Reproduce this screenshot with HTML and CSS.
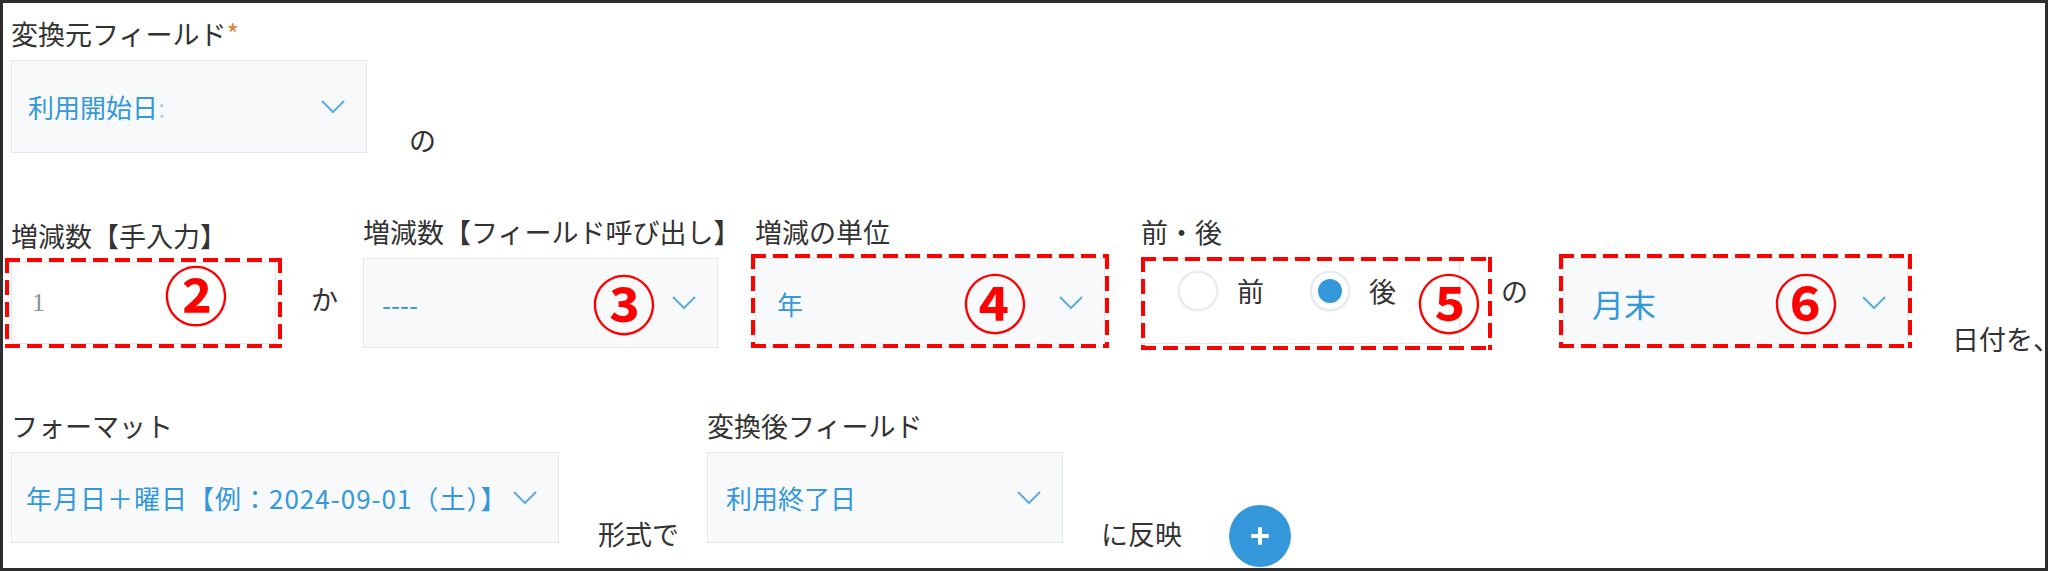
FILE: index.html
```html
<!DOCTYPE html>
<html lang="ja">
<head>
    <meta charset="UTF-8">
    <title>日付計算プラグイン設定</title>
    <link rel="stylesheet" href="styles.css">
</head>
<body>
    <div class="frame">

        <!-- 変換元 -->
        <div class="row">
            <div class="field">
                <div class="field-label">変換元フィールド<span class="req">*</span></div>
                <div class="select select-source">
                    <span class="select-text">利用開始日<span class="faint">:</span></span>
                    <svg class="chevron" viewBox="0 0 24 14"><polyline points="1,1 12,12 23,1"/></svg>
                </div>
            </div>
            <span class="joint joint-first">の</span>
        </div>

        <!-- 増減の設定 -->
        <div class="row row-mid">
            <div class="field">
                <div class="field-label">増減数【手入力】</div>
                <div class="control input-box">
                    <span class="input-value">1</span>
                    <span class="mark-box mark-box-input"></span>
                    <span class="mark mark-2">②</span>
                </div>
            </div>
            <span class="joint joint-ka">か</span>
            <div class="field field-call">
                <div class="field-label">増減数【フィールド呼び出し】</div>
                <div class="control select select-call">
                    <span class="select-text">----</span>
                    <svg class="chevron" viewBox="0 0 24 14"><polyline points="1,1 12,12 23,1"/></svg>
                    <span class="mark mark-3">③</span>
                </div>
            </div>
            <div class="field field-unit">
                <div class="field-label">増減の単位</div>
                <div class="control select select-unit">
                    <span class="select-text">年</span>
                    <svg class="chevron" viewBox="0 0 24 14"><polyline points="1,1 12,12 23,1"/></svg>
                    <span class="mark-box"></span>
                    <span class="mark mark-4">④</span>
                </div>
            </div>
            <div class="field field-side">
                <div class="field-label">前・後</div>
                <div class="control radio-box">
                    <label class="radio-option">
                        <span class="radio"></span>前
                    </label>
                    <label class="radio-option">
                        <span class="radio radio-on"></span>後
                    </label>
                    <span class="mark-box mark-box-radio"></span>
                    <span class="mark mark-5">⑤</span>
                </div>
            </div>
            <span class="joint joint-no2">の</span>
            <div class="field field-edge">
                <div class="control select select-edge">
                    <span class="select-text">月末</span>
                    <svg class="chevron" viewBox="0 0 24 14"><polyline points="1,1 12,12 23,1"/></svg>
                    <span class="mark-box"></span>
                    <span class="mark mark-6">⑥</span>
                </div>
            </div>
            <span class="joint joint-date">日付を、</span>
        </div>

        <!-- 出力 -->
        <div class="row row-last">
            <div class="field">
                <div class="field-label">フォーマット</div>
                <div class="select select-format">
                    <span class="select-text">年月日＋曜日【例：2024-09-01（土）】</span>
                    <svg class="chevron" viewBox="0 0 24 14"><polyline points="1,1 12,12 23,1"/></svg>
                </div>
            </div>
            <span class="joint joint-form">形式で</span>
            <div class="field field-target">
                <div class="field-label">変換後フィールド</div>
                <div class="select select-target">
                    <span class="select-text">利用終了日</span>
                    <svg class="chevron" viewBox="0 0 24 14"><polyline points="1,1 12,12 23,1"/></svg>
                </div>
            </div>
            <span class="joint joint-apply">に反映</span>
            <button class="add-button" type="button">
                <svg viewBox="0 0 20 20"><path d="M10 2v16M2 10h16"/></svg>
            </button>
        </div>

    </div>
</body>
</html>
```

FILE: styles.css
```css
body {
    margin: 0;
    background-color: white;
    font-family: "Noto Sans CJK JP", "Noto Sans", sans-serif;
    color: #333;
}

.frame {
    width: 2048px;
    height: 571px;
    box-sizing: border-box;
    border: 3px solid #2e2e2e;
    padding: 13px 0 0 8px;
    overflow: hidden;
}

.row {
    display: flex;
    align-items: flex-end;
}

.row > * {
    flex-shrink: 0;
}

.row-mid {
    margin-top: 61px;
}

.row-last {
    margin-top: 60px;
}

.field {
    display: flex;
    flex-direction: column;
}

.field-label {
    font-size: 27px;
    line-height: 36px;
    margin-bottom: 8px;
    white-space: nowrap;
}

.req {
    color: #d9833b;
}

/* select */
.select {
    position: relative;
    display: flex;
    align-items: center;
    justify-content: space-between;
    box-sizing: border-box;
    height: 91px;
    padding: 0 21px 0 16px;
    background-color: #f7f9fa;
    border: 1px solid #e3e7e8;
    color: #3498db;
    font-size: 26px;
}

.select-text {
    white-space: nowrap;
}

.faint {
    color: #b9d6ec;
}

.chevron {
    width: 24px;
    height: 14px;
    fill: none;
    stroke: #5dade2;
    stroke-width: 2;
}

.select-source {
    width: 356px;
    height: 93px;
}

.select-call {
    width: 355px;
    height: 90px;
    padding-left: 18px;
}

.select-unit {
    width: 350px;
    height: 90px;
    padding-left: 21px;
}

.select-edge {
    width: 345px;
    height: 90px;
    padding-left: 28px;
    font-size: 32px;
}

.select-format {
    width: 548px;
    padding-left: 14px;
    letter-spacing: 1px;
}

.select-target {
    width: 356px;
    padding-left: 18px;
}

/* input */
.control {
    position: relative;
}

.input-box {
    display: flex;
    align-items: center;
    box-sizing: border-box;
    width: 265px;
    height: 82px;
    margin-bottom: 4px;
    padding-left: 20px;
    background-color: white;
    border: 1px solid #e3e7e8;
    box-shadow: inset 0 0 8px rgba(0, 0, 0, 0.05);
}

.input-value {
    font-family: "Liberation Serif", serif;
    font-size: 26px;
    color: #8593a3;
}

/* radio */
.radio-box {
    display: flex;
    align-items: flex-start;
    gap: 46px;
    box-sizing: border-box;
    width: 319px;
    height: 86px;
    margin-bottom: 4px;
    padding: 12px 0 0 36px;
    background-color: white;
    border: 1px solid #e3e7e8;
}

.radio-option {
    display: flex;
    align-items: center;
    gap: 19px;
    font-size: 27px;
    line-height: 40px;
}

.radio {
    position: relative;
    box-sizing: border-box;
    width: 40px;
    height: 40px;
    border-radius: 50%;
    background-color: white;
    border: 2px solid #e8ecee;
    box-shadow: 0 0 2px rgba(0, 0, 0, 0.12);
}

.radio-on::after {
    content: "";
    position: absolute;
    top: 6px;
    left: 6px;
    width: 24px;
    height: 24px;
    border-radius: 50%;
    background-color: #3498db;
}

/* 接続の文字 */
.joint {
    font-size: 27px;
    line-height: 27px;
    white-space: nowrap;
}

.joint-first {
    margin-left: 42px;
}

.joint-ka {
    margin-left: 35px;
    margin-bottom: 36px;
}

.field-call {
    width: 355px;
    margin-left: 25px;
}

.field-unit {
    margin-left: 37px;
}

.field-side {
    margin-left: 36px;
}

.joint-no2 {
    margin-left: 41px;
    margin-bottom: 44px;
}

.field-edge {
    margin-left: 35px;
}

.joint-date {
    margin-left: 44px;
    margin-bottom: -4px;
}

.joint-form {
    margin-left: 39px;
    margin-bottom: -4px;
}

.field-target {
    margin-left: 28px;
}

.joint-apply {
    margin-left: 38px;
    margin-bottom: -4px;
}

.add-button {
    width: 62px;
    height: 62px;
    margin-left: 47px;
    margin-bottom: -24px;
    padding: 0;
    border: none;
    border-radius: 50%;
    background-color: #3498db;
    display: flex;
    align-items: center;
    justify-content: center;
}

.add-button svg {
    width: 22px;
    height: 22px;
    fill: none;
    stroke: white;
    stroke-width: 3.5;
}

/* 赤い注記（長めの破線） */
.mark-box {
    position: absolute;
    top: -5px;
    right: -5px;
    bottom: -1px;
    left: -5px;
    background:
        repeating-linear-gradient(90deg, #ff0000 0 15px, transparent 15px 22px) top left / 100% 4px no-repeat,
        repeating-linear-gradient(90deg, #ff0000 0 15px, transparent 15px 22px) bottom left / 100% 4px no-repeat,
        repeating-linear-gradient(180deg, #ff0000 0 15px, transparent 15px 22px) top left / 4px 100% no-repeat,
        repeating-linear-gradient(180deg, #ff0000 0 15px, transparent 15px 22px) top right / 4px 100% no-repeat;
}

.mark-box-input {
    top: -5px;
    right: -7px;
    bottom: -5px;
    left: -7px;
}

.mark-box-radio {
    top: -2px;
    right: -33px;
    bottom: -7px;
    left: -1px;
}

.mark {
    position: absolute;
    transform: translate(-50%, -50%);
    font-size: 64px;
    font-weight: 700;
    line-height: 1;
    color: #ff0000;
}

.mark-2 {
    left: 184px;
    top: 29px;
}

.mark-3 {
    left: 260px;
    top: 42px;
}

.mark-4 {
    left: 239px;
    top: 41px;
}

.mark-5 {
    left: 307px;
    top: 41px;
}

.mark-6 {
    left: 242px;
    top: 41px;
}
```
